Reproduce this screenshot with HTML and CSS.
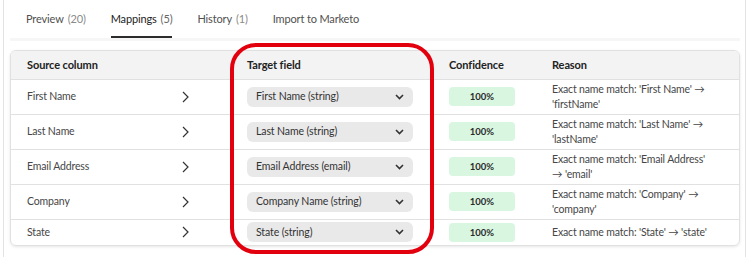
FILE: index.html
```html
<!DOCTYPE html>
<html lang="en">

<head>
    <meta charset="UTF-8">
    <meta name="viewport" content="width=device-width, initial-scale=1.0">
    <title>Mappings</title>
    <link rel="stylesheet" href="styles.css">
</head>

<body>
    <div class="panel">
        <div class="tabs">
            <div class="tab">Preview <span class="count">(20)</span></div>
            <div class="tab active">Mappings <span class="count">(5)</span></div>
            <div class="tab">History <span class="count">(1)</span></div>
            <div class="tab">Import to Marketo</div>
        </div>
        <div class="band"></div>

        <div class="card">
            <table>
                <colgroup>
                    <col class="c-source">
                    <col class="c-arrow">
                    <col class="c-target">
                    <col class="c-conf">
                    <col class="c-reason">
                </colgroup>
                <thead>
                    <tr>
                        <th>Source column</th>
                        <th></th>
                        <th>Target field</th>
                        <th>Confidence</th>
                        <th>Reason</th>
                    </tr>
                </thead>
                <tbody>
                    <tr>
                        <td>First Name</td>
                        <td class="arrow"><svg width="7" height="12" viewBox="0 0 7 12"><polyline points="1,1 6,6 1,11" /></svg></td>
                        <td><div class="select">First Name (string)<svg width="9" height="6" viewBox="0 0 9 6"><polyline points="1,1 4.5,4.5 8,1" /></svg></div></td>
                        <td><div class="badge">100%</div></td>
                        <td class="reason">Exact name match: 'First Name' → 'firstName'</td>
                    </tr>
                    <tr>
                        <td>Last Name</td>
                        <td class="arrow"><svg width="7" height="12" viewBox="0 0 7 12"><polyline points="1,1 6,6 1,11" /></svg></td>
                        <td><div class="select">Last Name (string)<svg width="9" height="6" viewBox="0 0 9 6"><polyline points="1,1 4.5,4.5 8,1" /></svg></div></td>
                        <td><div class="badge">100%</div></td>
                        <td class="reason">Exact name match: 'Last Name' → 'lastName'</td>
                    </tr>
                    <tr>
                        <td>Email Address</td>
                        <td class="arrow"><svg width="7" height="12" viewBox="0 0 7 12"><polyline points="1,1 6,6 1,11" /></svg></td>
                        <td><div class="select">Email Address (email)<svg width="9" height="6" viewBox="0 0 9 6"><polyline points="1,1 4.5,4.5 8,1" /></svg></div></td>
                        <td><div class="badge">100%</div></td>
                        <td class="reason">Exact name match: 'Email Address' → 'email'</td>
                    </tr>
                    <tr>
                        <td>Company</td>
                        <td class="arrow"><svg width="7" height="12" viewBox="0 0 7 12"><polyline points="1,1 6,6 1,11" /></svg></td>
                        <td><div class="select">Company Name (string)<svg width="9" height="6" viewBox="0 0 9 6"><polyline points="1,1 4.5,4.5 8,1" /></svg></div></td>
                        <td><div class="badge">100%</div></td>
                        <td class="reason">Exact name match: 'Company' → 'company'</td>
                    </tr>
                    <tr class="short">
                        <td>State</td>
                        <td class="arrow"><svg width="7" height="12" viewBox="0 0 7 12"><polyline points="1,1 6,6 1,11" /></svg></td>
                        <td><div class="select">State (string)<svg width="9" height="6" viewBox="0 0 9 6"><polyline points="1,1 4.5,4.5 8,1" /></svg></div></td>
                        <td><div class="badge">100%</div></td>
                        <td class="reason">Exact name match: 'State' → 'state'</td>
                    </tr>
                </tbody>
            </table>
        </div>
    </div>

    <!-- annotation drawn over the target column -->
    <div class="highlight"></div>
</body>

</html>
```

FILE: styles.css
```css
* {
    margin: 0;
    padding: 0;
    box-sizing: border-box;
}

body {
    position: relative;
    width: 750px;
    height: 257px;
    overflow: hidden;
    background: #fff;
    font-family: Lato, "Noto Sans", sans-serif;
    color: #2c2c2c;
}

.panel {
    margin-left: 3px;
    width: 743px;
    height: 257px;
    border-left: 1px solid #e3e3e3;
    border-right: 1px solid #e3e3e3;
}

.tabs {
    display: flex;
    gap: 25px;
    padding-left: 22px;
    height: 38px;
}

.tab {
    display: flex;
    align-items: center;
    height: 38px;
    padding-top: 1px;
    font-size: 11px;
    letter-spacing: -0.15px;
    color: #505050;
    border-bottom: 2px solid transparent;
}

.tab .count {
    margin-left: 4px;
    color: #8a8a8a;
}

.tab.active {
    color: #222;
    border-bottom-color: #2c2c2c;
}

.tab.active .count {
    color: #666;
}

.band {
    margin: 0 5px 0 6px;
    height: 3px;
    background: #f6f6f6;
}

.card {
    margin: 9px 5px 0 6px;
    border: 1px solid #e1e1e1;
    border-radius: 6px;
    overflow: hidden;
    box-shadow: rgba(0, 0, 0, 0.10) 0px 1px 3px;
}

table {
    width: 100%;
    border-collapse: collapse;
    table-layout: fixed;
}

.c-source {
    width: 159px;
}

.c-arrow {
    width: 61px;
}

.c-target {
    width: 202px;
}

.c-conf {
    width: 103px;
}

th {
    height: 28px;
    padding: 0 16px;
    text-align: left;
    font-size: 11px;
    letter-spacing: -0.1px;
    font-weight: 700;
    color: #222;
    background-color: #f3f3f3;
    border-bottom: 1px solid #e1e1e1;
}

td {
    padding: 2px 16px;
    font-size: 10.5px;
    letter-spacing: -0.15px;
    line-height: 15px;
    color: #464646;
    vertical-align: middle;
    border-bottom: 1px solid #e1e1e1;
}

tbody tr {
    height: 35px;
}

tbody tr.short {
    height: 26px;
}

tbody tr:last-child td {
    border-bottom: none;
}

td.arrow {
    padding-left: 12px;
}

td.arrow svg {
    display: block;
    fill: none;
    stroke: #333;
    stroke-width: 1.2;
}

.select {
    display: flex;
    align-items: center;
    justify-content: space-between;
    width: 166px;
    height: 20px;
    padding: 0 9px 0 9px;
    border-radius: 6px;
    background-color: #e9e9e9;
    font-size: 10.5px;
    letter-spacing: -0.1px;
    color: #333;
}

.select svg {
    fill: none;
    stroke: #333;
    stroke-width: 1.6;
}

.badge {
    width: 66px;
    height: 19px;
    line-height: 19px;
    border-radius: 4px;
    background-color: #d9f6e0;
    text-align: center;
    font-size: 9.5px;
    font-weight: 700;
    letter-spacing: 0;
    color: #2a2a2a;
}

td.reason {
    padding-right: 24px;
}

.highlight {
    position: absolute;
    left: 230px;
    top: 43px;
    width: 204px;
    height: 211px;
    border: 4px solid #e3000e;
    border-radius: 26px;
}
```
